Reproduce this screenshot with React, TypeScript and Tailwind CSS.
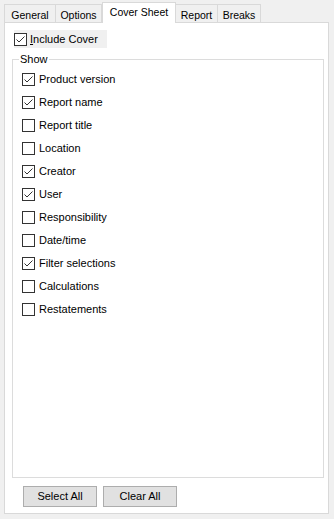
import React from 'react';

const tabs = [
  { label: 'General', w: 'w-[51px] border-l', active: false },
  { label: 'Options', w: 'w-[47px] border-l border-r', active: false },
  { label: 'Cover Sheet', w: 'w-[74px]', active: true },
  { label: 'Report', w: 'w-[42px] border-r', active: false },
  { label: 'Breaks', w: 'w-[43px] border-r', active: false },
];

const items: [string, boolean][] = [
  ['Product version', true],
  ['Report name', true],
  ['Report title', false],
  ['Location', false],
  ['Creator', true],
  ['User', true],
  ['Responsibility', false],
  ['Date/time', false],
  ['Filter selections', true],
  ['Calculations', false],
  ['Restatements', false],
];

function Box({ checked }: { checked: boolean }) {
  return (
    <span className="w-[13px] h-[13px] shrink-0 border border-[#333333] bg-white flex items-center justify-center">
      {checked && (
        <svg width="11" height="11" viewBox="0 0 11 11">
          <polyline points="1.5,5.5 4,8 9.5,2.5" fill="none" stroke="#333333" strokeWidth="1" />
        </svg>
      )}
    </span>
  );
}

export default function App() {
  return (
    <div className="w-[334px] h-[519px] bg-[#f0f0f0] font-['Liberation_Sans',Arial,sans-serif] text-[11px] text-black">
      <div className="flex items-end h-[22px] pl-[4px]">
        {tabs.map((t) =>
          t.active ? (
            <div
              key={t.label}
              className={`${t.w} h-[21px] -mb-px relative z-10 bg-white border border-b-0 border-[#d9d9d9] flex justify-center pt-[3px] leading-[13px] text-[10.5px]`}
            >
              {t.label}
            </div>
          ) : (
            <div
              key={t.label}
              className={`${t.w} h-[18px] border-t border-[#d9d9d9] flex justify-center pt-[4px] leading-[13px] text-[10.5px]`}
            >
              {t.label}
            </div>
          )
        )}
      </div>

      <div className="ml-[4px] w-[325px] h-[492px] bg-white border border-[#d9d9d9]">
        <label className="mt-[7px] ml-[9px] w-[93px] h-[18px] bg-[#f0f0f0] flex items-center gap-[3px] leading-[13px] pt-px">
          <Box checked={true} />
          <span>
            <span className="underline">I</span>nclude Cover
          </span>
        </label>

        <fieldset className="mt-[5px] ml-[7px] w-[312px] h-[425px] border border-[#dcdcdc] pl-[9px] pt-[2px]">
          <legend className="-ml-[3px] px-[1px] leading-[13px]">Show</legend>
          {items.map(([label, checked]) => (
            <div key={label} className="h-[23px] flex items-center gap-[4px] leading-[13px]">
              <Box checked={checked} />
              <span>{label}</span>
            </div>
          ))}
        </fieldset>

        <div className="flex gap-[6px] mt-[8px] ml-[18px]">
          <button className="w-[74px] h-[21px] bg-[#e1e1e1] border border-[#adadad] leading-[13px]">Select All</button>
          <button className="w-[74px] h-[21px] bg-[#e1e1e1] border border-[#adadad] leading-[13px]">Clear All</button>
        </div>
      </div>
    </div>
  );
}
